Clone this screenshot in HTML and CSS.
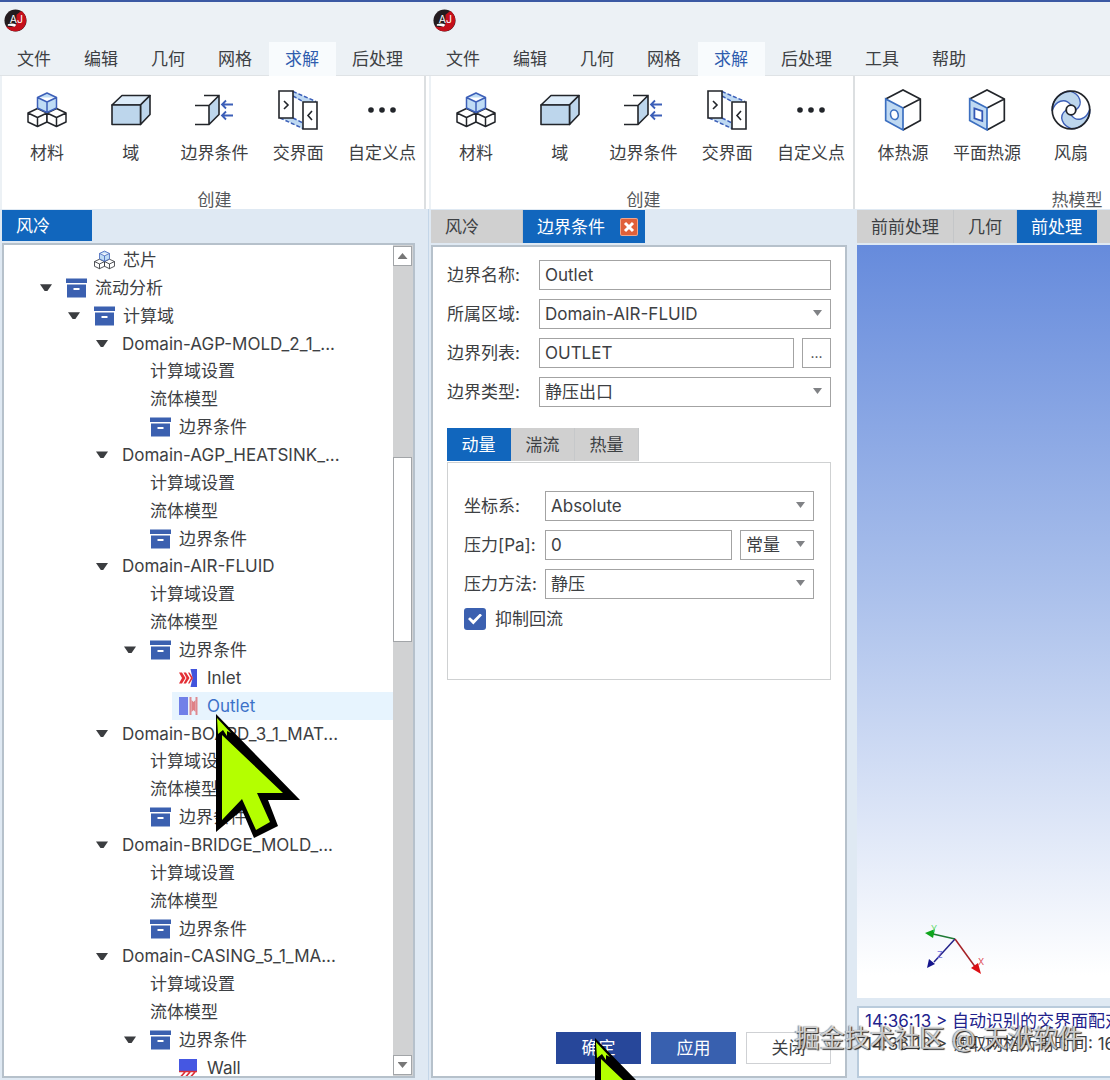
FILE: index.html
```html
<!DOCTYPE html>
<html lang="zh-CN">
<head>
    <meta charset="UTF-8">
    <meta name="viewport" content="width=device-width, initial-scale=1.0">
    <title>边界条件</title>
    <link rel="stylesheet" href="styles.css">
</head>
<body>
    <!-- shared icons -->
    <svg class="sprite" aria-hidden="true">
        <symbol id="logo" viewBox="0 0 24 24">
            <circle cx="12" cy="12" r="11.5" fill="#241c1f"/>
            <path d="M18 2.200A11.500 11.500 0 1 1 2 18Q8 20 13 17V6Z" fill="#c5101b"/>
            <text x="6" y="15" font-size="11" fill="#fff">AJ</text>
            <path d="M4 16Q9 14 13 16.500L11 18.500Q7 17 4 17.500Z" fill="#fff"/>
        </symbol>
        <symbol id="cubes" viewBox="0 0 40 36">
            <g fill="#fff" stroke="#22252a" stroke-width="1.5" stroke-linejoin="round">
                <path d="M10.500 16.500L20 21V30L10.500 34.500L1 30V21ZM1 21L10.500 25.500L20 21M10.500 25.500V34.500"/>
                <path d="M29.500 16.500L39 21V30L29.500 34.500L20 30V21ZM20 21L29.500 25.500L39 21M29.500 25.500V34.500"/>
            </g>
            <path d="M20 1L29.500 5.500V16L20 20.500L10.500 16V5.500ZM10.500 5.500L20 10L29.500 5.500M20 10V20.500" fill="#bfdcf5" stroke="#3c5fb8" stroke-width="1.500" stroke-linejoin="round"/>
        </symbol>
        <symbol id="domain" viewBox="0 0 40 32">
            <g stroke="#22252a" stroke-width="1.600" stroke-linejoin="round">
                <path d="M1 11L11 1.500H39L29.500 11Z" fill="#dcebf8"/>
                <path d="M29.500 11L39 1.500V20.500L29.500 30.500Z" fill="#bdd6ec"/>
                <path d="M1 11H29.500V30.500H1Z" fill="#bdd6ec"/>
            </g>
        </symbol>
        <symbol id="boundary" viewBox="0 0 40 32">
            <path d="M15 11.500L25 1.500V20L15 30.500Z" fill="#bdd6ec"/>
            <path d="M10 1.500H25V20.500L15 30.500H1M1 11.500H15V30.500M15 11.500L25 1.500" fill="none" stroke="#22252a" stroke-width="1.600"/>
            <path d="M39 10.500H28M32 6.500L28 10.500L32 14.500M39 21.500H28M32 17.500L28 21.500L32 25.500" fill="none" stroke="#3c5fb8" stroke-width="1.800"/>
        </symbol>
        <symbol id="interface" viewBox="0 0 40 40">
            <path d="M15 1L39 12H25L15 7ZM3 28L25 39H39L15 28Z" fill="#bfd9f2"/>
            <path d="M15 1.500L38 11.500M15 6L25 11.500M2 28L25 38.500M15 28L25 33" fill="none" stroke="#3c5fb8" stroke-width="1.500" stroke-dasharray="4 2"/>
            <path d="M1 1H15V28H1ZM25 12H39V39H25Z" fill="#fff" stroke="#22252a" stroke-width="1.600"/>
            <path d="M6 11L10 15L6 19M34 21L30 25.500L34 30" fill="none" stroke="#22252a" stroke-width="1.600"/>
        </symbol>
        <symbol id="dots" viewBox="0 0 40 40">
            <g fill="#22252a"><circle cx="9" cy="20" r="2.800"/><circle cx="20" cy="20" r="2.800"/><circle cx="31" cy="20" r="2.800"/></g>
        </symbol>
        <symbol id="heat-body" viewBox="0 0 36 40">
            <path d="M18 1L34.500 9.500V30L18 39L1.500 30V9.500Z" fill="#fff"/>
            <path d="M1.500 9.500L18 18V39L1.500 30Z" fill="#bfd9f2"/>
            <path d="M1.500 9.500L18 1L34.500 9.500V30L18 39M34.500 9.500L18 18" fill="none" stroke="#22252a" stroke-width="1.600"/>
            <path d="M18 18V39L1.500 30V9.500Z" fill="none" stroke="#3c6fc0" stroke-width="1.600"/>
            <ellipse cx="9.800" cy="24.500" rx="3.600" ry="4.600" fill="#fff" stroke="#3c6fc0" stroke-width="1.500" transform="rotate(-15 9.800 24.500)"/>
        </symbol>
        <symbol id="heat-plane" viewBox="0 0 36 40">
            <path d="M18 1L34.500 9.500V30L18 39L1.500 30V9.500Z" fill="#fff"/>
            <path d="M1.500 9.500L18 18V39L1.500 30Z" fill="#bfd9f2"/>
            <path d="M1.500 9.500L18 1L34.500 9.500V30L18 39M34.500 9.500L18 18" fill="none" stroke="#22252a" stroke-width="1.600"/>
            <path d="M18 18V39L1.500 30V9.500Z" fill="none" stroke="#3c6fc0" stroke-width="1.600"/>
            <path d="M6 18.500L13.500 21V30.500L6 28Z" fill="#fff" stroke="#3457b5" stroke-width="1.700"/>
        </symbol>
        <symbol id="fan" viewBox="0 0 40 40">
            <circle cx="20" cy="20" r="18.800" fill="#fff"/>
            <g fill="#bdd6ec" stroke="#3c5fb8" stroke-width="1.400">
                <path d="M24.800 20C33 14 29 4 19 1.200A18.800 18.800 0 0 0 1.200 21C4 11 14 7 20 15.200Z"/>
                <path d="M24.800 20C33 14 29 4 19 1.200A18.800 18.800 0 0 0 1.200 21C4 11 14 7 20 15.200Z" transform="rotate(180 20 20)"/>
            </g>
            <circle cx="20" cy="20" r="18.800" fill="none" stroke="#22252a" stroke-width="1.700"/>
            <circle cx="20" cy="20" r="4.800" fill="#fff" stroke="#22252a" stroke-width="1.800"/>
        </symbol>
        <symbol id="box" viewBox="0 0 21 20">
            <path d="M0 .5H21V5H0ZM1 6.500H20V19.500H1Z" fill="#3b60b0"/>
            <path d="M7.500 10H13.500V12H7.500Z" fill="#fff"/>
        </symbol>
        <symbol id="inlet" viewBox="0 0 21 20">
            <path d="M12.500 1H19V19H12.500L14.500 10Z" fill="#4254dc"/>
            <path d="M1 4.500H4L7.500 10L4 15.500H1L4 10ZM5.500 4.500H8L11.500 10L8 15.500H5.500L8.500 10ZM10 4.500H11.500L15 10L11.500 15.500H10L13 10Z" fill="#e32f36"/>
        </symbol>
        <symbol id="outlet" viewBox="0 0 21 20">
            <path d="M1 1H10V19H1Z" fill="#7180e8"/>
            <path d="M11.500 1H13.500V19H11.500ZM17.500 1H19.500V19H17.500Z" fill="#df898f"/>
            <path d="M13.500 4L15.500 6L17.500 4V16L15.500 14L13.500 16Z" fill="#df8086"/>
        </symbol>
        <symbol id="wall" viewBox="0 0 21 20">
            <path d="M1 1H19V13H1Z" fill="#4557e2"/>
            <path d="M1 13.500H19M7 14L3 18.500M12 14L8 18.500M17 14L13 18.500" stroke="#dc3038" stroke-width="1.700" fill="none"/>
        </symbol>
        <symbol id="pointer" viewBox="0 0 90 128">
            <path d="M3 2L87 88H55L65 114L41 126L29 98L3 120Z" fill="#000"/>
            <path d="M9 23L70 81H44L57 110L43 118L29 87L9 108ZM4 6L18 21L14 19V24L10 18L5 22Z" fill="#b4ff00"/>
        </symbol>
    </svg>

    <div class="windows">
        <section class="window">
            <header class="titlebar"><svg class="logo"><use href="#logo"/></svg></header>
            <nav class="menu">
                <button type="button">文件</button>
                <button type="button">编辑</button>
                <button type="button">几何</button>
                <button type="button">网格</button>
                <button type="button" class="active">求解</button>
                <button type="button">后处理</button>
            </nav>
            <div class="ribbon">
                <div class="group">
                    <div class="tools">
                        <button type="button"><svg class="tool-icon"><use href="#cubes"/></svg>材料</button>
                        <button type="button"><svg class="tool-icon"><use href="#domain"/></svg>域</button>
                        <button type="button"><svg class="tool-icon"><use href="#boundary"/></svg>边界条件</button>
                        <button type="button"><svg class="tool-icon"><use href="#interface"/></svg>交界面</button>
                        <button type="button"><svg class="tool-icon"><use href="#dots"/></svg>自定义点</button>
                    </div>
                    <div class="caption">创建</div>
                </div>
            </div>
            <div class="workspace single">
                <div class="dock">
                    <div class="tabs"><button type="button" class="tab project active">风冷</button></div>
                    <div class="panel tree-panel">
                        <ul class="tree">
                            <li class="level-2"><span class="toggle"></span><span class="node"><svg><use href="#cubes"/></svg>芯片</span></li>
                            <li class="level-1"><button type="button" class="toggle" aria-label="流动分析"></button><span class="node"><svg><use href="#box"/></svg>流动分析</span></li>
                            <li class="level-2"><button type="button" class="toggle" aria-label="计算域"></button><span class="node"><svg><use href="#box"/></svg>计算域</span></li>
                            <li class="level-3"><button type="button" class="toggle" aria-label="Domain"></button><span class="node">Domain-AGP-MOLD_2_1_...</span></li>
                            <li class="level-4"><span class="toggle"></span><span class="node">计算域设置</span></li>
                            <li class="level-4"><span class="toggle"></span><span class="node">流体模型</span></li>
                            <li class="level-4"><span class="toggle"></span><span class="node"><svg><use href="#box"/></svg>边界条件</span></li>
                            <li class="level-3"><button type="button" class="toggle" aria-label="Domain"></button><span class="node">Domain-AGP_HEATSINK_...</span></li>
                            <li class="level-4"><span class="toggle"></span><span class="node">计算域设置</span></li>
                            <li class="level-4"><span class="toggle"></span><span class="node">流体模型</span></li>
                            <li class="level-4"><span class="toggle"></span><span class="node"><svg><use href="#box"/></svg>边界条件</span></li>
                            <li class="level-3"><button type="button" class="toggle" aria-label="Domain"></button><span class="node">Domain-AIR-FLUID</span></li>
                            <li class="level-4"><span class="toggle"></span><span class="node">计算域设置</span></li>
                            <li class="level-4"><span class="toggle"></span><span class="node">流体模型</span></li>
                            <li class="level-4"><button type="button" class="toggle" aria-label="边界条件"></button><span class="node"><svg><use href="#box"/></svg>边界条件</span></li>
                            <li class="level-5"><span class="toggle"></span><span class="node"><svg><use href="#inlet"/></svg>Inlet</span></li>
                            <li class="level-5"><span class="toggle"></span><span class="node selected"><svg><use href="#outlet"/></svg>Outlet</span></li>
                            <li class="level-3"><button type="button" class="toggle" aria-label="Domain"></button><span class="node">Domain-BOARD_3_1_MAT...</span></li>
                            <li class="level-4"><span class="toggle"></span><span class="node">计算域设置</span></li>
                            <li class="level-4"><span class="toggle"></span><span class="node">流体模型</span></li>
                            <li class="level-4"><span class="toggle"></span><span class="node"><svg><use href="#box"/></svg>边界条件</span></li>
                            <li class="level-3"><button type="button" class="toggle" aria-label="Domain"></button><span class="node">Domain-BRIDGE_MOLD_...</span></li>
                            <li class="level-4"><span class="toggle"></span><span class="node">计算域设置</span></li>
                            <li class="level-4"><span class="toggle"></span><span class="node">流体模型</span></li>
                            <li class="level-4"><span class="toggle"></span><span class="node"><svg><use href="#box"/></svg>边界条件</span></li>
                            <li class="level-3"><button type="button" class="toggle" aria-label="Domain"></button><span class="node">Domain-CASING_5_1_MA...</span></li>
                            <li class="level-4"><span class="toggle"></span><span class="node">计算域设置</span></li>
                            <li class="level-4"><span class="toggle"></span><span class="node">流体模型</span></li>
                            <li class="level-4"><button type="button" class="toggle" aria-label="边界条件"></button><span class="node"><svg><use href="#box"/></svg>边界条件</span></li>
                            <li class="level-5"><span class="toggle"></span><span class="node"><svg><use href="#wall"/></svg>Wall</span></li>
                        </ul>
                        <div class="scrollbar">
                            <button type="button" class="up" aria-label="向上"></button>
                            <div class="track"><div class="thumb"></div></div>
                            <button type="button" class="down" aria-label="向下"></button>
                        </div>
                    </div>
                </div>
            </div>
            <svg class="pointer pointer-tree"><use href="#pointer"/></svg>
        </section>

        <section class="window">
            <header class="titlebar"><svg class="logo"><use href="#logo"/></svg></header>
            <nav class="menu">
                <button type="button">文件</button>
                <button type="button">编辑</button>
                <button type="button">几何</button>
                <button type="button">网格</button>
                <button type="button" class="active">求解</button>
                <button type="button">后处理</button>
                <button type="button">工具</button>
                <button type="button">帮助</button>
            </nav>
            <div class="ribbon">
                <div class="group">
                    <div class="tools">
                        <button type="button"><svg class="tool-icon"><use href="#cubes"/></svg>材料</button>
                        <button type="button"><svg class="tool-icon"><use href="#domain"/></svg>域</button>
                        <button type="button"><svg class="tool-icon"><use href="#boundary"/></svg>边界条件</button>
                        <button type="button"><svg class="tool-icon"><use href="#interface"/></svg>交界面</button>
                        <button type="button"><svg class="tool-icon"><use href="#dots"/></svg>自定义点</button>
                    </div>
                    <div class="caption">创建</div>
                </div>
                <div class="group">
                    <div class="tools">
                        <button type="button"><svg class="tool-icon"><use href="#heat-body"/></svg>体热源</button>
                        <button type="button"><svg class="tool-icon"><use href="#heat-plane"/></svg>平面热源</button>
                        <button type="button"><svg class="tool-icon"><use href="#fan"/></svg>风扇</button>
                    </div>
                    <div class="caption">热模型</div>
                </div>
            </div>
            <div class="workspace">
                <div class="dock">
                    <div class="tabs">
                        <button type="button" class="tab project">风冷</button>
                        <button type="button" class="tab active">边界条件
                            <svg class="close" viewBox="0 0 18 18"><rect width="18" height="18" rx="2" fill="#f0a58a"/><rect x="1" y="1" width="16" height="16" rx="1" fill="#e0603a"/><path d="M5 5L13 13M13 5L5 13" stroke="#fff" stroke-width="3"/></svg>
                        </button>
                    </div>
                    <form class="panel form-panel">
                        <div class="fields">
                            <label for="name">边界名称:</label>
                            <div class="control"><input id="name" type="text" value="Outlet"></div>
                            <label for="region">所属区域:</label>
                            <div class="control"><span class="select"><select id="region"><option>Domain-AIR-FLUID</option></select></span></div>
                            <label for="list">边界列表:</label>
                            <div class="control"><input id="list" type="text" value="OUTLET"><button type="button" class="browse">...</button></div>
                            <label for="type">边界类型:</label>
                            <div class="control"><span class="select"><select id="type"><option>静压出口</option></select></span></div>
                        </div>
                        <div class="subtabs">
                            <button type="button" class="active">动量</button>
                            <button type="button">湍流</button>
                            <button type="button">热量</button>
                        </div>
                        <div class="box">
                            <div class="fields inner">
                                <label for="coord">坐标系:</label>
                                <div class="control"><span class="select"><select id="coord"><option>Absolute</option></select></span></div>
                                <label for="pressure">压力[Pa]:</label>
                                <div class="control"><input id="pressure" type="text" value="0"><span class="select unit"><select aria-label="常量"><option>常量</option></select></span></div>
                                <label for="method">压力方法:</label>
                                <div class="control"><span class="select"><select id="method"><option>静压</option></select></span></div>
                            </div>
                            <label class="check"><input type="checkbox" checked>抑制回流</label>
                        </div>
                        <div class="actions">
                            <button type="button" class="ok">确定</button>
                            <button type="button" class="apply">应用</button>
                            <button type="button">关闭</button>
                        </div>
                    </form>
                </div>
                <div class="dock view-dock">
                    <div class="tabs">
                        <button type="button" class="tab">前前处理</button>
                        <button type="button" class="tab">几何</button>
                        <button type="button" class="tab active">前处理</button>
                        <div class="tab-rest"></div>
                    </div>
                    <div class="canvas">
                        <svg class="axes" viewBox="0 0 62 52">
                            <path d="M31 15L9 10" stroke="#1f7a35" stroke-width="1.500"/>
                            <path d="M31 15L10 38" stroke="#22228a" stroke-width="1.500"/>
                            <path d="M31 15L52 44" stroke="#a52126" stroke-width="1.500"/>
                            <path d="M1 9L11 5L9 14Z" fill="#0fa51c"/>
                            <path d="M3 44L5 35L11 40Z" fill="#14148c"/>
                            <path d="M57 50L47 44L54 39Z" fill="#dc0f14"/>
                            <g font-size="9"><text x="7" y="8" fill="#6ddc78">Y</text><text x="13" y="34" fill="#7070e0">Z</text><text x="54" y="41" fill="#e05058">X</text></g>
                        </svg>
                    </div>
                    <div class="log">
                        <p class="info">14:36:13 &gt; 自动识别的交界面配对</p>
                        <p>14:36:13 &gt; 读取网格所用时间: 16</p>
                    </div>
                </div>
            </div>
            <svg class="pointer pointer-ok"><use href="#pointer"/></svg>
        </section>
    </div>
    <div class="watermark">掘金技术社区 @ 天洑软件</div>
</body>
</html>
```
FILE: styles.css
```css
* {
    box-sizing: border-box;
}
body {
    margin: 0;
    height: 100vh;
    position: relative;
    overflow: hidden;
    font-family: "Inter", "Noto Sans CJK SC", sans-serif;
    font-size: 17px;
    line-height: 24px;
    color: #3d4043;
    background: #ecf1f5;
}
button, input, select {
    font: inherit;
    color: inherit;
    margin: 0;
    padding: 0;
    border: none;
    border-radius: 0;
    background: none;
}
button {
    cursor: pointer;
    white-space: nowrap;
}
.sprite {
    position: absolute;
    width: 0;
    height: 0;
}
.windows {
    display: grid;
    grid-template-columns: minmax(0, 429fr) minmax(0, 681fr);
    height: 100%;
}
.window {
    position: relative;
    display: flex;
    flex-direction: column;
    min-height: 0;
    overflow: hidden;
    border-top: 2px solid #3b59a3;
}

/* title bar and menu */
.titlebar {
    height: 40px;
    padding: 7px 4px;
}
.logo {
    display: block;
    width: 23px;
    height: 23px;
}
.menu {
    display: flex;
    height: 34px;
    padding-left: 1px;
    border-bottom: 1px solid #dfe3e6;
}
.menu button {
    height: 34px;
    padding: 0 17px 0 16px;
}
.menu .active {
    background: #f8fbfd;
    color: #2f5cae;
}

/* ribbon */
.ribbon {
    display: flex;
    height: 133px;
    margin-left: 2px;
    background: #fff;
}
.group {
    display: flex;
    flex-direction: column;
    flex: none;
    width: 424px;
    padding: 13px 0 0 3px;
    border-right: 2px solid #dcdfe1;
}
.group + .group {
    width: 444px;
    padding-left: 6px;
}
.group + .group .caption {
    padding-right: 4px;
}
.tools {
    display: flex;
    flex: 1;
}
.tools button {
    display: flex;
    flex-direction: column;
    align-items: center;
    flex: 0 0 20%;
    gap: 10px;
    height: 76px;
}
.group + .group .tools button {
    flex: 0 0 84px;
}
.tool-icon {
    width: 40px;
    height: 42px;
}
.caption {
    text-align: center;
    height: 21px;
    color: #55585b;
}

/* docks */
.workspace {
    flex: 1;
    display: grid;
    grid-template-columns: minmax(0, 416fr) minmax(0, 253fr);
    gap: 10px;
    min-height: 0;
    padding: 1px 0 2px 2px;
    background: #dfe9f3;
}
.workspace.single {
    grid-template-columns: minmax(0, 1fr);
    padding-right: 13px;
    border-right: 1px solid #c4d6e8;
}
.dock {
    display: flex;
    flex-direction: column;
    min-height: 0;
}
.tabs {
    display: flex;
    height: 33px;
    margin-bottom: 2px;
}
.tab {
    display: flex;
    align-items: center;
    gap: 15px;
    padding: 0 14px;
    background: #d0d0d0;
    border-right: 1px solid #c4c6c8;
}
.tab.project {
    width: 92px;
}
.tab.active {
    background: #1166bd;
    border-color: #1166bd;
    color: #fff;
}
.tab .close {
    width: 18px;
    height: 18px;
    margin-right: -8px;
}
.tab-rest {
    flex: 1;
    background: #d0d0d0;
}
.panel {
    flex: 1;
    min-height: 0;
    background: #fff;
    border: 2px solid #b6c1cb;
}
.single .tabs {
    height: 31px;
}
.single .tab.project {
    width: 90px;
}

/* tree */
.tree-panel {
    display: flex;
    overflow: hidden;
}
.tree {
    flex: 1;
    min-width: 0;
    display: flex;
    flex-direction: column;
    margin: 1px 0 -6px;
    padding: 0;
    list-style: none;
}
.tree li {
    flex: 1;
    min-height: 0;
    display: flex;
}
.level-1 { padding-left: 28px; }
.level-2 { padding-left: 56px; }
.level-3 { padding-left: 84px; }
.level-4 { padding-left: 112px; }
.level-5 { padding-left: 140px; }
.toggle {
    flex: none;
    width: 28px;
    display: flex;
    align-items: center;
    justify-content: center;
}
button.toggle::before {
    content: "";
    width: 12px;
    height: 7px;
    background: #3b3d40;
    clip-path: polygon(0 0, 100% 0, 60% 100%, 40% 100%);
}
.node {
    flex: 1;
    display: flex;
    align-items: center;
    gap: 8px;
    padding-left: 6px;
    white-space: nowrap;
}
.node svg {
    width: 21px;
    height: 20px;
}
.selected {
    background: #e7f4fe;
    color: #3c72c9;
}
.scrollbar {
    display: flex;
    flex-direction: column;
    width: 20px;
    padding: 1px 1px 1px 0;
    background: #d1d2d3;
}
.scrollbar button {
    height: 20px;
    display: flex;
    align-items: center;
    justify-content: center;
    background: #fff;
    border: 1px solid #a2a5a8;
}
.scrollbar button::before {
    content: "";
    width: 10px;
    height: 6px;
    background: #777;
    clip-path: polygon(50% 0, 100% 100%, 0 100%);
}
.scrollbar .down::before {
    clip-path: polygon(0 0, 100% 0, 50% 100%);
}
.track {
    flex: 1;
    display: grid;
    grid-template-rows: 191fr 185fr 414fr;
}
.thumb {
    grid-row: 2;
    background: #fff;
    border: 1px solid #a2a5a8;
}

/* form */
.form-panel {
    display: flex;
    flex-direction: column;
    padding: 13px 14px 12px;
}
.fields {
    display: grid;
    grid-template-columns: 92px minmax(0, 1fr);
    gap: 9px 0;
    align-items: center;
}
.fields.inner {
    grid-template-columns: 81px minmax(0, 1fr);
}
.control {
    display: flex;
    gap: 8px;
}
.control input,
.control select {
    flex: 1;
    min-width: 0;
    width: 100%;
    height: 30px;
    padding: 0 5px;
    border: 1px solid #a3a3a3;
    background: #fff;
    appearance: none;
}
.select {
    position: relative;
    display: flex;
    flex: 1;
}
.select.unit {
    flex: 0 0 74px;
}
.select::after {
    content: "";
    position: absolute;
    right: 9px;
    top: 11px;
    width: 9px;
    height: 6px;
    background: #808285;
    clip-path: polygon(0 0, 100% 0, 50% 100%);
    pointer-events: none;
}
.browse {
    width: 29px;
    border: 1px solid #a3a3a3;
    font-size: 14px;
}
.subtabs {
    display: flex;
    margin-top: 21px;
}
.subtabs button {
    width: 64px;
    height: 33px;
    background: #d0d0d0;
    border-right: 1px solid #c6c8ca;
}
.subtabs .active {
    background: #1166bd;
    border-color: #1166bd;
    color: #fff;
}
.box {
    margin-top: 1px;
    padding: 28px 16px 48px;
    border: 1px solid #cfd1d2;
}
.check {
    display: flex;
    align-items: center;
    gap: 9px;
    margin-top: 8px;
}
.check input {
    appearance: none;
    width: 22px;
    height: 22px;
    border-radius: 3px;
    background: #3b60b0;
    display: flex;
    align-items: center;
    justify-content: center;
}
.check input:checked::before {
    content: "";
    width: 14px;
    height: 11px;
    background: #fff;
    clip-path: polygon(0 50%, 14% 35%, 38% 62%, 86% 0, 100% 16%, 38% 100%);
}
.actions {
    display: flex;
    justify-content: flex-end;
    gap: 10px;
    margin-top: auto;
}
.actions button {
    width: 85px;
    height: 32px;
    border: 1px solid #cfd1d4;
}
.actions .ok {
    background: #27479a;
    border-color: #27479a;
    color: #fff;
}
.actions .apply {
    background: #3860af;
    border-color: #3860af;
    color: #fff;
}

/* 3D view and log */
.canvas {
    flex: 1;
    display: flex;
    align-items: flex-end;
    padding: 0 0 22px 67px;
    background: linear-gradient(#668bdc, #a9bfeb 45%, #fff 97%);
}
.axes {
    width: 62px;
    height: 52px;
}
.log {
    height: 72px;
    margin-top: 8px;
    padding: 2px 6px;
    overflow: hidden;
    background: #fff;
    border: 2px solid #b9cbdc;
    border-right: none;
}
.log p {
    margin: 0;
    line-height: 23px;
    white-space: nowrap;
}
.log .info {
    color: #22228c;
}

/* overlays */
.pointer {
    position: absolute;
    width: 90px;
    height: 128px;
    pointer-events: none;
}
.pointer-tree {
    left: 213px;
    top: 710px;
}
.pointer-ok {
    left: 163px;
    top: 1034px;
}
.watermark {
    position: absolute;
    right: 27px;
    bottom: 24px;
    font-size: 25px;
    line-height: 36px;
    color: rgba(235, 235, 235, 0.8);
    text-shadow: 1px 1px 1px #222, -1px 0 1px #888;
    white-space: nowrap;
    pointer-events: none;
}
```
